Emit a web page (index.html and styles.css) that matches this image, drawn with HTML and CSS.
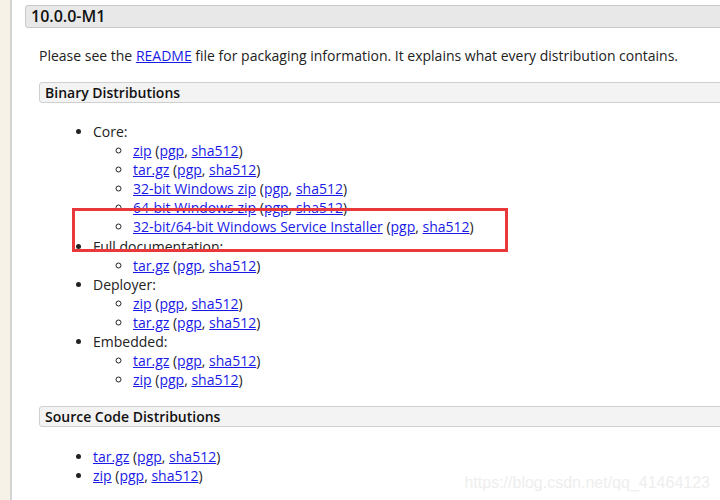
FILE: index.html
```html
<!DOCTYPE html>
<html>
<head>
<meta charset="utf-8">
<link rel="stylesheet" href="styles.css">
</head>
<body>
<div class="page">
  <div class="strip"></div>
  <main class="main">
    <h2 class="release">10.0.0-M1</h2>
    <div class="section">
      <p class="intro">Please see the <a href="#">README</a> file for packaging information. It explains what every distribution contains.</p>
      <h3 class="sub">Binary Distributions</h3>
      <ul class="list">
        <li>Core:
          <ul>
            <li><a href="#">zip</a> (<a href="#">pgp</a>, <a href="#">sha512</a>)</li>
            <li><a href="#">tar.gz</a> (<a href="#">pgp</a>, <a href="#">sha512</a>)</li>
            <li><a href="#">32-bit Windows zip</a> (<a href="#">pgp</a>, <a href="#">sha512</a>)</li>
            <li><a href="#">64-bit Windows zip</a> (<a href="#">pgp</a>, <a href="#">sha512</a>)</li>
            <li><a href="#">32-bit/64-bit Windows Service Installer</a> (<a href="#">pgp</a>, <a href="#">sha512</a>)</li>
          </ul>
        </li>
        <li>Full documentation:
          <ul>
            <li><a href="#">tar.gz</a> (<a href="#">pgp</a>, <a href="#">sha512</a>)</li>
          </ul>
        </li>
        <li>Deployer:
          <ul>
            <li><a href="#">zip</a> (<a href="#">pgp</a>, <a href="#">sha512</a>)</li>
            <li><a href="#">tar.gz</a> (<a href="#">pgp</a>, <a href="#">sha512</a>)</li>
          </ul>
        </li>
        <li>Embedded:
          <ul>
            <li><a href="#">tar.gz</a> (<a href="#">pgp</a>, <a href="#">sha512</a>)</li>
            <li><a href="#">zip</a> (<a href="#">pgp</a>, <a href="#">sha512</a>)</li>
          </ul>
        </li>
      </ul>
      <h3 class="sub">Source Code Distributions</h3>
      <ul class="list src">
        <li><a href="#">tar.gz</a> (<a href="#">pgp</a>, <a href="#">sha512</a>)</li>
        <li><a href="#">zip</a> (<a href="#">pgp</a>, <a href="#">sha512</a>)</li>
      </ul>
    </div>
  </main>
</div>
<div class="highlight"></div>
<div class="watermark">https://blog.csdn.net/qq_41464123</div>
</body>
</html>
```
FILE: styles.css
```css
html, body {
  margin: 0;
  padding: 0;
  background: #fff;
}
body {
  position: relative;
  width: 720px;
  height: 500px;
  overflow: hidden;
  font-family: "Open Sans", "Noto Sans", sans-serif;
  font-size: 14px;
  color: #222;
}
.page {
  display: flex;
  height: 500px;
}
.strip {
  width: 10px;
  flex: none;
  background: #f7f2e8;
  border-right: 2px solid #d4d4d4;
}
.main {
  flex: 1;
  min-width: 0;
  overflow: hidden;
}
.release {
  margin: 5px -20px 0 13px;
  padding: 0 5px;
  height: 21px;
  line-height: 21px;
  font-size: 16px;
  font-weight: 600;
  color: #111;
  background: #e8e8e8;
  border: 1px solid #c8c8c8;
  border-radius: 3px;
}
.section {
  padding-left: 27px;
}
.intro {
  margin: 18px 0 0 0;
  line-height: 19px;
}
a {
  color: #1a1ae6;
  text-decoration: underline;
}
.sub {
  margin: 17px -20px 0 0;
  padding: 0 5px;
  height: 19px;
  line-height: 19px;
  font-size: 14px;
  font-weight: 600;
  color: #111;
  background: #f3f3f3;
  border: 1px solid #cfcfcf;
  border-radius: 3px;
}
.list {
  margin: 19px 0 17px 0;
  padding-left: 54px;
  line-height: 19.1px;
  list-style: disc;
}
.list ul {
  margin: 0;
  padding-left: 40px;
  list-style: circle;
}
.list.src {
  margin-top: 20px;
}
.highlight {
  position: absolute;
  left: 72px;
  top: 208px;
  width: 430px;
  height: 38px;
  border: 3px solid #e8383b;
}
.watermark {
  position: absolute;
  right: 10px;
  top: 474px;
  font-family: "Liberation Sans", Arial, sans-serif;
  font-size: 16px;
  color: #eeeeee;
}
```
